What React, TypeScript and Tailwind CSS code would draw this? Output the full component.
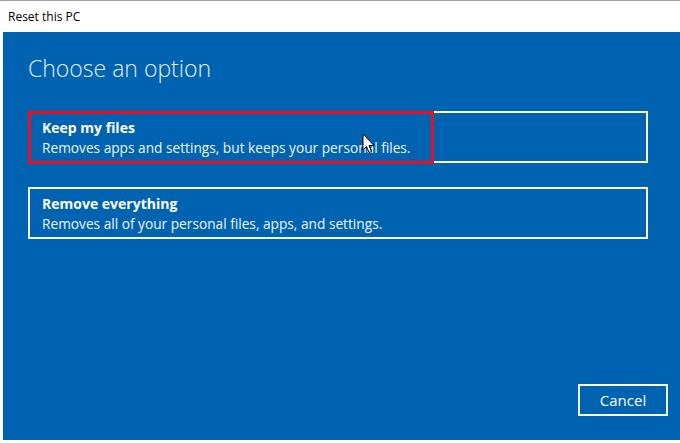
export default function App() {
  const font = { fontFamily: '"Open Sans", "Noto Sans", sans-serif' };

  return (
    <div className="relative w-[680px] h-[443px] overflow-hidden bg-white border-t border-[#a0a0a0]" style={font}>
      {/* title bar */}
      <div className="h-[31px] flex items-center pl-[8px] text-[12px] text-black">Reset this PC</div>

      {/* recovery panel */}
      <div className="ml-[3px] h-[408px] bg-[#0063b1] flex flex-col pl-[25px] pr-[12px]">
        <h1 className="mt-[20px] text-[23px] leading-[32px] font-light text-[#e3eefa]">Choose an option</h1>

        <div className="mt-[27px] flex flex-col gap-[24px] w-[620px]">
          <div className="h-[52px] border-2 border-white px-[12px] pt-[5px] text-white">
            <div className="text-[14px] leading-[20px] font-bold">Keep my files</div>
            <div className="text-[13.7px] leading-[20px] text-[#eef5fc]">Removes apps and settings, but keeps your personal files.</div>
          </div>
          <div className="h-[52px] border-2 border-white px-[12px] pt-[5px] text-white">
            <div className="text-[14px] leading-[20px] font-bold">Remove everything</div>
            <div className="text-[13.7px] leading-[20px] text-[#eef5fc]">Removes all of your personal files, apps, and settings.</div>
          </div>
        </div>

        <div className="mt-auto mb-[24px] flex justify-end">
          <button className="w-[90px] h-[32px] border-2 border-white text-[15px] text-white flex items-center justify-center">
            Cancel
          </button>
        </div>
      </div>

      {/* annotation highlight */}
      <div className="absolute left-[28px] top-[110px] w-[406px] h-[53px] border-[3px] border-[#e81123]" />

      {/* mouse pointer */}
      <svg className="absolute left-[362px] top-[132px]" width="13" height="21" viewBox="0 0 13 21">
        <path d="M1 1 L1 17 L4.5 13.5 L7 19.5 L9.5 18.5 L7 12.5 L12 12.5 Z" fill="white" stroke="black" strokeWidth="1" strokeLinejoin="round" />
      </svg>
    </div>
  );
}
